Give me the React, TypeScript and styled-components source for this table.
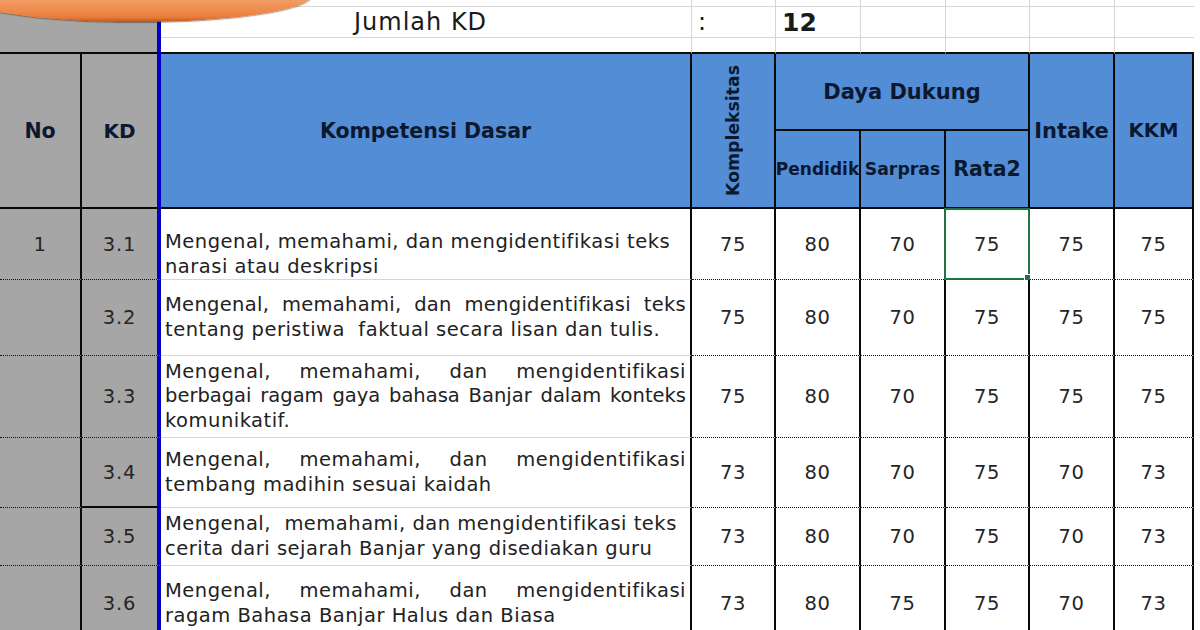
import React from 'react';
import styled, { createGlobalStyle } from 'styled-components';

const Global = createGlobalStyle`
  html, body { margin: 0; padding: 0; background: #fff; overflow: hidden; }
  body { width: 1200px; height: 630px; }
`;

type VLine = 'none' | 'black' | 'blue' | 'grid';
type HLine = 'none' | 'black' | 'dotted' | 'grid';

const vline = (l: VLine) =>
  l === 'black' ? '2px solid #0a0a0a' : l === 'blue' ? '4px solid #0000c8' : l === 'grid' ? '1px solid #d6d6d6' : '0';
const hline = (l: HLine) =>
  l === 'black' ? '2px solid #0a0a0a' : l === 'dotted' ? '1px dotted #111' : l === 'grid' ? '1px solid #d6d6d6' : '0';

const COLS = '82px 79px 531px 84px 85px 85px 84px 85px 79px';

const Page = styled.div`
  position: relative;
  width: 1200px;
  height: 630px;
  overflow: hidden;
  background: #fff;
`;

const Sheet = styled.div`
  display: flex;
  flex-direction: column;
  width: 1194px;
  margin-top: -23px;
  font-family: "DejaVu Sans", "Liberation Sans", sans-serif;
`;

const TopArea = styled.div`
  display: grid;
  grid-template-columns: ${COLS};
  grid-template-rows: 30px 31px 16px;
`;

const HeaderGrid = styled.div`
  display: grid;
  grid-template-columns: ${COLS};
  grid-template-rows: 77px 78px;
`;

const DataRow = styled.div<{ $h: number }>`
  display: grid;
  grid-template-columns: ${COLS};
  height: ${(p) => p.$h}px;
`;

const Base = styled.div<{ $r: VLine; $b: HLine; $area?: string }>`
  box-sizing: border-box;
  min-width: 0;
  overflow: hidden;
  border-right: ${(p) => vline(p.$r)};
  border-bottom: ${(p) => hline(p.$b)};
  ${(p) => (p.$area ? `grid-area: ${p.$area};` : '')}
`;

const SideBlock = styled(Base)`
  grid-row: 1 / 4;
  grid-column: 1 / 3;
  background: #a6a6a6;
`;

const TopCell = styled(Base)<{ $pad?: number; $bold?: boolean }>`
  background: #fff;
  display: flex;
  align-items: center;
  padding-left: ${(p) => p.$pad ?? 0}px;
  font-size: ${(p) => (p.$bold ? 25 : 24)}px;
  letter-spacing: ${(p) => (p.$bold ? 0 : 1)}px;
  font-weight: ${(p) => (p.$bold ? 700 : 400)};
  color: #1a1a1a;
  white-space: nowrap;
`;

const HeadCell = styled(Base)<{ $gray?: boolean; $size: number }>`
  background: ${(p) => (p.$gray ? '#a6a6a6' : '#538dd5')};
  display: flex;
  align-items: center;
  justify-content: center;
  font-size: ${(p) => p.$size}px;
  font-weight: 700;
  color: #0c1830;
  white-space: nowrap;
`;

const Rotated = styled.span`
  writing-mode: vertical-rl;
  transform: rotate(180deg);
`;

const SideCell = styled(Base)`
  background: #a6a6a6;
  display: flex;
  align-items: center;
  justify-content: center;
  font-size: 19.5px;
  letter-spacing: 0.8px;
  color: #262626;
`;

const TextCell = styled(Base)<{ $end?: boolean }>`
  background: #fff;
  display: flex;
  flex-direction: column;
  justify-content: ${(p) => (p.$end ? 'flex-end' : 'center')};
  padding: 0 4px;
  font-size: 19.5px;
  line-height: 24.5px;
  color: #222;
`;

const TextLine = styled.span<{ $justify?: boolean; $ls?: number }>`
  display: block;
  letter-spacing: ${(p) => p.$ls ?? 0.5}px;
  white-space: ${(p) => (p.$justify ? 'normal' : 'pre')};
  text-align: ${(p) => (p.$justify ? 'justify' : 'left')};
  text-align-last: ${(p) => (p.$justify ? 'justify' : 'auto')};
`;

const NumCell = styled(Base)`
  position: relative;
  overflow: visible;
  background: #fff;
  display: flex;
  align-items: center;
  justify-content: center;
  font-size: 19.5px;
  letter-spacing: 0.6px;
  color: #262626;
`;

const Selection = styled.div`
  position: absolute;
  left: -2px;
  top: -1px;
  right: -2px;
  bottom: -1px;
  border: 2px solid #217346;
  pointer-events: none;
`;

const Handle = styled.div`
  position: absolute;
  right: -5px;
  bottom: -5px;
  width: 7px;
  height: 7px;
  background: #217346;
  border: 1px solid #fff;
`;

const Callout = styled.div`
  position: absolute;
  left: -40px;
  top: -32px;
  width: 352px;
  height: 54px;
  border-radius: 50%;
  background: linear-gradient(to bottom, #f8c8a2 0%, #f3a46f 50%, #ee8a4b 80%, #e67a38 92%, #b5561d 100%);
  box-shadow: 0 1px 1px rgba(60, 30, 10, 0.45);
`;

type Line = { t: string; j?: boolean; ls?: number };

type Row = {
  no?: string;
  kd: string;
  h: number;
  lines: Line[];
  vals: number[];
  end?: boolean;
  kdBottom?: HLine;
};

const rows: Row[] = [
  {
    no: '1',
    kd: '3.1',
    h: 71,
    lines: [{ t: 'Mengenal, memahami, dan mengidentifikasi teks' }, { t: 'narasi atau deskripsi' }],
    vals: [75, 80, 70, 75, 75, 75],
    end: true,
  },
  {
    kd: '3.2',
    h: 76,
    lines: [
      { t: 'Mengenal,  memahami, dan mengidentifikasi teks', j: true, ls: 0.3 },
      { t: 'tentang peristiwa  faktual secara lisan dan tulis.' },
    ],
    vals: [75, 80, 70, 75, 75, 75],
  },
  {
    kd: '3.3',
    h: 82,
    lines: [
      { t: 'Mengenal, memahami, dan mengidentifikasi', j: true },
      { t: 'berbagai ragam gaya bahasa Banjar dalam konteks', j: true, ls: 0 },
      { t: 'komunikatif.' },
    ],
    vals: [75, 80, 70, 75, 75, 75],
  },
  {
    kd: '3.4',
    h: 70,
    lines: [{ t: 'Mengenal, memahami, dan mengidentifikasi', j: true }, { t: 'tembang madihin sesuai kaidah' }],
    vals: [73, 80, 70, 75, 70, 73],
    kdBottom: 'black',
  },
  {
    kd: '3.5',
    h: 58,
    lines: [
      { t: 'Mengenal,  memahami, dan mengidentifikasi teks' },
      { t: 'cerita dari sejarah Banjar yang disediakan guru' },
    ],
    vals: [73, 80, 70, 75, 70, 73],
  },
  {
    kd: '3.6',
    h: 76,
    lines: [{ t: 'Mengenal, memahami, dan mengidentifikasi', j: true }, { t: 'ragam Bahasa Banjar Halus dan Biasa' }],
    vals: [73, 80, 75, 75, 70, 73],
  },
];

const topRows: { label: string; value: string }[] = [
  { label: 'Kelas', value: '7' },
  { label: 'Jumlah KD', value: '12' },
  { label: '', value: '' },
];

export default function App() {
  return (
    <Page>
      <Global />
      <Sheet>
        <TopArea>
          <SideBlock $r="blue" $b="black" />
          {topRows.map((t, i) => {
            const b: HLine = i === 2 ? 'black' : 'grid';
            return (
              <React.Fragment key={i}>
                <TopCell $r="grid" $b={b} $pad={193}>{t.label}</TopCell>
                <TopCell $r="grid" $b={b} $pad={6}>{t.label ? ':' : ''}</TopCell>
                <TopCell $r="grid" $b={b} $pad={6} $bold>{t.value}</TopCell>
                <TopCell $r="grid" $b={b} />
                <TopCell $r="grid" $b={b} />
                <TopCell $r="grid" $b={b} />
                <TopCell $r="none" $b={b} />
              </React.Fragment>
            );
          })}
        </TopArea>

        <HeaderGrid>
          <HeadCell $gray $r="black" $b="black" $size={20.5} $area="1 / 1 / 3 / 2">No</HeadCell>
          <HeadCell $gray $r="blue" $b="black" $size={20} $area="1 / 2 / 3 / 3">KD</HeadCell>
          <HeadCell $r="black" $b="black" $size={20.5} $area="1 / 3 / 3 / 4">Kompetensi Dasar</HeadCell>
          <HeadCell $r="black" $b="black" $size={17.3} $area="1 / 4 / 3 / 5">
            <Rotated>Kompleksitas</Rotated>
          </HeadCell>
          <HeadCell $r="black" $b="black" $size={21} $area="1 / 5 / 2 / 8">Daya Dukung</HeadCell>
          <HeadCell $r="black" $b="black" $size={21} $area="1 / 8 / 3 / 9">Intake</HeadCell>
          <HeadCell $r="black" $b="black" $size={19.6} $area="1 / 9 / 3 / 10">KKM</HeadCell>
          <HeadCell $r="black" $b="black" $size={17} $area="2 / 5 / 3 / 6">Pendidik</HeadCell>
          <HeadCell $r="black" $b="black" $size={17.3} $area="2 / 6 / 3 / 7">Sarpras</HeadCell>
          <HeadCell $r="black" $b="black" $size={20.5} $area="2 / 7 / 3 / 8">Rata2</HeadCell>
        </HeaderGrid>

        {rows.map((r, i) => (
          <DataRow key={r.kd} $h={r.h}>
            <SideCell $r="black" $b="dotted">{r.no ?? ''}</SideCell>
            <SideCell $r="blue" $b={r.kdBottom ?? 'dotted'}>{r.kd}</SideCell>
            <TextCell $r="black" $b="grid" $end={r.end}>
              {r.lines.map((l, k) => (
                <TextLine key={k} $justify={l.j} $ls={l.ls}>{l.t}</TextLine>
              ))}
            </TextCell>
            {r.vals.map((v, k) => (
              <NumCell key={k} $r="black" $b="dotted">
                {v}
                {i === 0 && k === 3 && (
                  <Selection>
                    <Handle />
                  </Selection>
                )}
              </NumCell>
            ))}
          </DataRow>
        ))}
      </Sheet>
      <Callout />
    </Page>
  );
}
